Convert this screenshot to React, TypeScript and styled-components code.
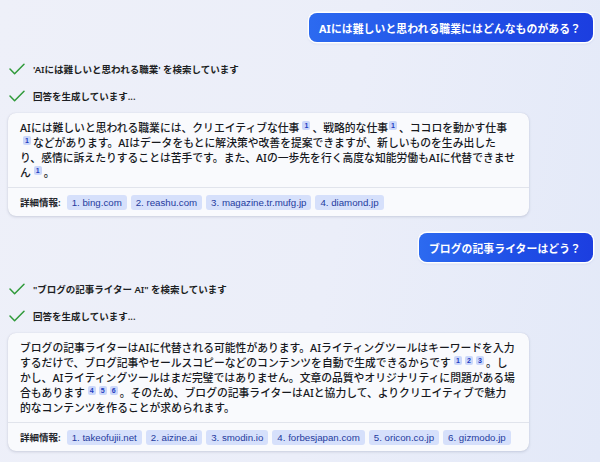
import React from "react";
import styled, { createGlobalStyle } from "styled-components";

const GlobalStyle = createGlobalStyle`
  html, body {
    margin: 0;
    padding: 0;
    width: 600px;
    height: 462px;
    overflow: hidden;
  }
  body {
    font-family: "Noto Sans", "Noto Sans CJK JP", sans-serif;
    background: linear-gradient(100deg, #eef0f9 0%, #ebeef9 55%, #e3e9f8 100%);
    color: #16181d;
  }
`;

type Answer = {
  query: string;
  search: string;
  lines: React.ReactNode[];
  sources: string[];
};

const Ref = ({ n }: { n: number }) => <Sup>{n}</Sup>;

const answers: Answer[] = [
  {
    query: "AIには難しいと思われる職業にはどんなものがある？",
    search: "'AIには難しいと思われる職業' を検索しています",
    lines: [
      <>
        AIには難しいと思われる職業には、クリエイティブな仕事
        <Ref n={1} />
        、戦略的な仕事
        <Ref n={1} />
        、ココロを動かす仕事
      </>,
      <>
        <Ref n={1} />
        などがあります。AIはデータをもとに解決策や改善を提案できますが、新しいものを生み出した
      </>,
      <>り、感情に訴えたりすることは苦手です。また、AIの一歩先を行く高度な知能労働もAIに代替できませ</>,
      <>
        ん<Ref n={1} />。
      </>,
    ],
    sources: ["1. bing.com", "2. reashu.com", "3. magazine.tr.mufg.jp", "4. diamond.jp"],
  },
  {
    query: "ブログの記事ライターはどう？",
    search: "\"ブログの記事ライター AI\" を検索しています",
    lines: [
      <>ブログの記事ライターはAIに代替される可能性があります。AIライティングツールはキーワードを入力</>,
      <>
        するだけで、ブログ記事やセールスコピーなどのコンテンツを自動で生成できるからです
        <Ref n={1} />
        <Ref n={2} />
        <Ref n={3} />
        。し
      </>,
      <>かし、AIライティングツールはまだ完璧ではありません。文章の品質やオリジナリティに問題がある場</>,
      <>
        合もあります
        <Ref n={4} />
        <Ref n={5} />
        <Ref n={6} />
        。そのため、ブログの記事ライターはAIと協力して、よりクリエイティブで魅力
      </>,
      <>的なコンテンツを作ることが求められます。</>,
    ],
    sources: [
      "1. takeofujii.net",
      "2. aizine.ai",
      "3. smodin.io",
      "4. forbesjapan.com",
      "5. oricon.co.jp",
      "6. gizmodo.jp",
    ],
  },
];

const Check = () => (
  <svg width="16" height="12" viewBox="0 0 16 12" fill="none">
    <path d="M1 6 L5.6 10.8 L15 1.2" stroke="#2f9a3a" strokeWidth="1.5" strokeLinecap="round" strokeLinejoin="round" />
  </svg>
);

export default function App() {
  return (
    <>
      <GlobalStyle />
      <Page>
        {answers.map((a, i) => (
          <Turn key={i} $first={i === 0}>
            <UserRow>
              <UserBubble>{a.query}</UserBubble>
            </UserRow>
            <Steps>
              <Step>
                <Check />
                <span>{a.search}</span>
              </Step>
              <Step>
                <Check />
                <span>回答を生成しています...</span>
              </Step>
            </Steps>
            <Card>
              <Body>
                {a.lines.map((l, j) => (
                  <Line key={j}>{l}</Line>
                ))}
              </Body>
              <Footer>
                <Label>詳細情報:</Label>
                {a.sources.map((s) => (
                  <Chip key={s}>{s}</Chip>
                ))}
              </Footer>
            </Card>
          </Turn>
        ))}
      </Page>
    </>
  );
}

const Page = styled.div`
  display: flex;
  flex-direction: column;
  padding: 13px 7px 0 8px;
`;

const Turn = styled.section<{ $first?: boolean }>`
  display: flex;
  flex-direction: column;
  margin-top: ${(p) => (p.$first ? "0" : "17px")};
`;

const UserRow = styled.div`
  display: flex;
  justify-content: flex-end;
`;

const UserBubble = styled.div`
  height: 29px;
  box-sizing: border-box;
  display: flex;
  align-items: center;
  padding: 0 12px 0 10px;
  border-radius: 8px;
  background: linear-gradient(90deg, #2c6af0 0%, #1f4fe6 55%, #1c3ee0 100%);
  box-shadow: 0 0 0 1.5px #ffffff, 0 1px 3px rgba(30, 60, 180, 0.25);
  color: #fff;
  font-size: 10.8px;
  font-weight: 700;
  letter-spacing: 0.1px;
  white-space: nowrap;
`;

const Steps = styled.div`
  display: flex;
  flex-direction: column;
  gap: 13px;
  margin-top: 20px;
`;

const Step = styled.div`
  display: flex;
  align-items: center;
  gap: 8px;
  height: 14px;
  padding-left: 1px;
  font-size: 9.5px;
  font-weight: 600;
  color: #1d1f24;
  white-space: nowrap;
`;

const Card = styled.div`
  margin-top: 10px;
  width: 521px;
  background: #f9fafd;
  border-radius: 8px;
  box-shadow: 0 1px 3px rgba(40, 50, 90, 0.16), 0 0 1px rgba(40, 50, 90, 0.15);
  display: flex;
  flex-direction: column;
`;

const Body = styled.div`
  padding: 7px 12px 7px 12px;
  border-bottom: 1px solid #e1e4ec;
`;

const Line = styled.div`
  height: 15px;
  line-height: 15px;
  font-size: 10.8px;
  font-weight: 500;
  color: #17191e;
  white-space: nowrap;
`;

const Sup = styled.span`
  display: inline-block;
  vertical-align: top;
  margin: 1px 2px 0 3px;
  min-width: 6px;
  height: 9px;
  line-height: 9px;
  padding: 0 1px;
  border-radius: 2px;
  background: #cbd7fa;
  color: #1d3cc0;
  font-family: "Liberation Sans", Arial, sans-serif;
  font-size: 7px;
  font-weight: 700;
  text-align: center;
  & + & {
    margin-left: 1px;
  }
`;

const Footer = styled.div`
  height: 28px;
  display: flex;
  align-items: center;
  gap: 4px;
  padding: 0 12px;
`;

const Label = styled.span`
  font-size: 9.5px;
  font-weight: 600;
  color: #24262c;
  margin-right: 2px;
  white-space: nowrap;
`;

const Chip = styled.span`
  height: 15px;
  line-height: 15px;
  padding: 0 5px;
  border-radius: 3px;
  background: #d6e0fb;
  color: #1f3b9e;
  font-family: "Liberation Sans", Arial, sans-serif;
  font-size: 9.7px;
  white-space: nowrap;
`;
